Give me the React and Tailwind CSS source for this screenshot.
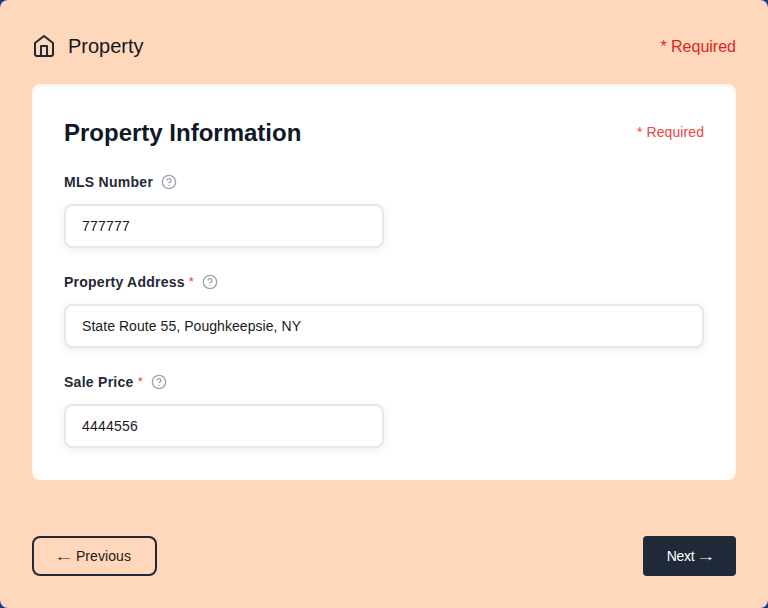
function HomeIcon() {
  return (
    <svg className="h-6 w-6 text-[#1f2937]" viewBox="0 0 24 24" fill="none" stroke="currentColor" strokeWidth="2" strokeLinecap="round" strokeLinejoin="round">
      <path d="M3 9l9-7 9 7v11a2 2 0 0 1-2 2H5a2 2 0 0 1-2-2z" />
      <polyline points="9 22 9 12 15 12 15 22" />
    </svg>
  );
}

function HelpIcon() {
  return (
    <svg className="ml-2 h-4 w-4 shrink-0 text-[#9ca3af]" viewBox="0 0 24 24" fill="none" stroke="currentColor" strokeWidth="2" strokeLinecap="round" strokeLinejoin="round">
      <circle cx="12" cy="12" r="10" />
      <path d="M9.09 9a3 3 0 0 1 5.83 1c0 2-3 3-3 3" />
      <path d="M12 17h.01" />
    </svg>
  );
}

function Field({ label, labelClass, required, value, valueClass, wide }) {
  return (
    <div>
      <div className="mb-3 flex h-5 items-center">
        <label className={`flex h-5 items-center text-sm font-bold whitespace-nowrap text-[#1f2937] ${labelClass}`}>
          <span>{label}</span>
          {required && <span className="ml-1 text-[13px] font-normal tracking-normal text-[#ef4444]">*</span>}
        </label>
        <HelpIcon />
      </div>
      <div
        className={`flex h-11 items-center rounded-lg border-2 border-[#e5e7eb] bg-white px-4 text-sm text-[#1a1a1a] shadow-[0_2px_8px_rgba(0,0,0,0.08)] ${valueClass} ${wide ? "w-full" : "w-80"}`}
      >
        {value}
      </div>
    </div>
  );
}

export default function App() {
  return (
    <div className="h-[608px] w-[768px] bg-[#1e3a8a] font-['Liberation_Sans',Arial,sans-serif]">
      <div className="flex h-full flex-col rounded-lg bg-[#ffd7ba] px-8 pt-8 pb-8">
        <header className="flex h-7 items-center justify-between">
          <div className="flex items-center gap-3">
            <HomeIcon />
            <h1 className="text-xl text-[#111827]">Property</h1>
          </div>
          <span className="pt-0.5 text-base text-[#dc2626]">* Required</span>
        </header>

        <main className="mt-6 h-[396px] rounded-lg bg-white p-8 shadow-[inset_0_2px_4px_rgba(0,0,0,0.06)]">
          <div className="mb-6 flex h-8 items-center justify-between">
            <h2 className="pt-0.5 text-2xl font-bold text-[#111827]">Property Information</h2>
            <span className="text-sm tracking-[0.08px] text-[#ef4444]">* Required</span>
          </div>
          <div className="flex flex-col gap-6">
            <Field label="MLS Number" labelClass="w-[89px] tracking-[0.28px]" value="777777" valueClass="tracking-[0.21px]" />
            <Field label="Property Address" labelClass="w-[130px] tracking-[0.24px]" required value="State Route 55, Poughkeepsie, NY" valueClass="tracking-[0.06px]" wide />
            <Field label="Sale Price" labelClass="w-[79px] tracking-[0.27px]" required value="4444556" valueClass="tracking-[0.21px]" />
          </div>
        </main>

        <footer className="mt-auto flex justify-between">
          <button className="flex h-10 w-[125px] items-center justify-center rounded-lg border-2 border-[#1f2937] text-sm text-[#1a1a1a]">
            <span className="mr-1 inline-block -translate-x-px translate-y-px scale-x-[1.45] scale-y-90 font-['Liberation_Serif',serif]">←</span>
            <span className="tracking-[0.08px]">Previous</span>
          </button>
          <button className="flex h-10 w-[93px] items-center justify-center rounded bg-[#1f2937] text-sm text-white">
            <span className="tracking-[-0.3px]">Next</span>
            <span className="ml-1 inline-block translate-x-px translate-y-px scale-x-[1.45] scale-y-90 font-['Liberation_Serif',serif]">→</span>
          </button>
        </footer>
      </div>
    </div>
  );
}
